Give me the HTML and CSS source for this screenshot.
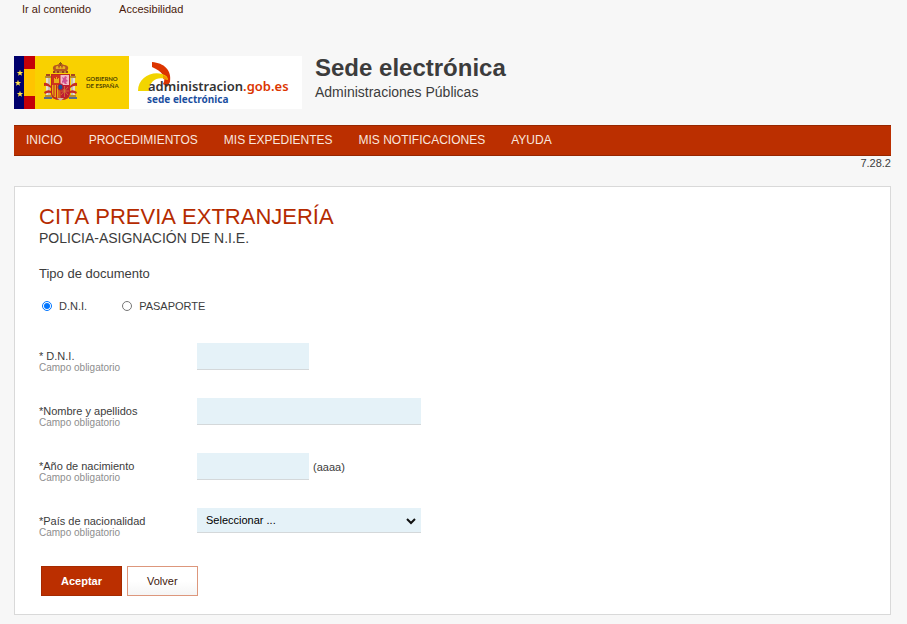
FILE: index.html
```
<!DOCTYPE html>
<html lang="es">
<head>
<meta charset="utf-8">
<meta name="viewport" content="width=device-width, initial-scale=1">
<title>Sede electrónica</title>
<link rel="stylesheet" href="styles.css">
</head>
<body>
<div class="quick-links">
  <a href="#contenido">Ir al contenido</a>
  <a href="#accesibilidad">Accesibilidad</a>
</div>
<header class="header">
  <svg class="logo" width="288" height="53" viewBox="0 0 288 53">
    <rect width="288" height="53" fill="#fff"/>
    <rect width="115" height="53" fill="#f9d100"/>
    <rect width="10" height="53" fill="#00006c"/>
    <rect x="10" width="11" height="53" fill="#ffc400"/>
    <rect x="10" width="11" height="13" fill="#c40008"/>
    <rect x="10" y="40" width="11" height="13" fill="#c40008"/>
    <defs><path id="star" fill="#ffe34d" d="M0-3.2.8-1h2.4L1.3.5 2 2.8 0 1.4-2 2.8-1.3.5-3.2-1H-.8z"/></defs>
    <use href="#star" x="6" y="17"/><use href="#star" x="4" y="27"/><use href="#star" x="6" y="38"/>
    <!-- Coat of arms -->
    <g>
      <path d="M40 15c-3-5 1-6 3-6 1-1 2-1 3.500-1s2.500 0 3.500 1c3 0 6 2 3 6z" fill="#b6571f"/>
      <path d="M42 13c-1-3 1-3 2-3l1 3 1.500-4 1.500 4 1-3c2 0 3 1 2 3z" fill="#e8b21c"/>
      <path d="M46.500 6v4M45 7.500h3" stroke="#8a5a10" fill="none"/>
      <path d="M39 15h15v2H39z" fill="#96401c"/>
      <path d="M41 16h2m2 0h3m2 0h2" stroke="#e8c33c" fill="none"/>
      <path d="M37 18h19v20q0 6-9.500 6T37 38z" fill="#bd2a20"/>
      <path d="M38 19h8.500v10H38z" fill="#d1321c"/>
      <path d="M40 27v-5h1v1h1v-2h1v2h1v-1h1v5z" fill="#e9ad1b"/>
      <path d="M46.500 19H55v10h-8.500z" fill="#f2b9c4"/>
      <path d="m48 21 2 1 1-2 2 1-1 2 2 2-2 1 1 2h-2l-2-2-1 2v-3l1-1z" fill="#cf4f91"/>
      <path d="M38 29h8.500v13q-8.500 0-8.500-5z" fill="#e8a918"/>
      <path d="M40 29v11m2.500-11v13m2.500-13v13" stroke="#c3231c" fill="none"/>
      <path d="M46.500 29H55v8q0 5-8.500 5z" fill="#bd1b35"/>
      <path d="m47 31 7 8m0-8-7 8m3.500-9v11M47 35h8" stroke="#d98735" stroke-width=".7" fill="none"/>
      <ellipse cx="46.500" cy="31" rx="3" ry="3.500" fill="#b51d30"/>
      <ellipse cx="46.500" cy="31" rx="2" ry="2.500" fill="#164f9a"/>
      <path d="M43 42h7l-3.500 3z" fill="#d7b4a0"/>
      <g id="pillar">
        <path d="M32 21h4v19h-4z" fill="#e6dfcd"/>
        <path d="M35 22v17" stroke="#a8a391" fill="none"/>
        <path d="M31 20h6v2h-6zM31 39h6v2h-6z" fill="#b98b29"/>
        <path d="M32 20v-2h4v2z" fill="#a64620"/>
        <path d="M30 41h8v2h-8z" fill="#596b8a"/>
        <path d="M30 27q3-1 7 3v2q-4-3-7-2zM30 36q4-3 7-1v2q-3-1-6 1z" fill="#c72c20"/>
      </g>
      <use href="#pillar" transform="matrix(-1 0 0 1 93 0)"/>
    </g>
    <text class="gov-text" x="72" y="25">GOBIERNO</text>
    <text class="gov-text" x="72" y="32">DE ESPAÑA</text>
    <path d="M138 6c12 1 20 8 18 20l-3 5-4-3c4-6-1-13-11-17z" fill="#dc3500"/>
    <path d="M124 35c0-13 13-20 24-17 4 1 6 3 6 6-9-4-18-1-19 11z" fill="#f2d500"/>
    <path d="M149 19c3 1 5 3 5 5l-5-1z" fill="#f39800"/>
    <text class="site-text" x="134" y="35">administracion<tspan fill="#dc3500">.gob.es</tspan></text>
    <text class="office-text" x="133" y="47">sede electrónica</text>
  </svg>
  <div>
    <div class="site-name">Sede electrónica</div>
    <div class="site-owner">Administraciones Públicas</div>
  </div>
</header>
<nav class="nav">
  <a href="#inicio">INICIO</a>
  <a href="#procedimientos">PROCEDIMIENTOS</a>
  <a href="#expedientes">MIS EXPEDIENTES</a>
  <a href="#notificaciones">MIS NOTIFICACIONES</a>
  <a href="#ayuda">AYUDA</a>
</nav>
<div class="version">7.28.2</div>
<main class="card" id="contenido">
  <h1>CITA PREVIA EXTRANJERÍA</h1>
  <h2>POLICIA-ASIGNACIÓN DE N.I.E.</h2>
  <form>
    <fieldset class="doc-type">
      <legend>Tipo de documento</legend>
      <div class="options">
        <label><input type="radio" name="doc" checked>D.N.I.</label>
        <label><input type="radio" name="doc">PASAPORTE</label>
      </div>
    </fieldset>
    <div class="fields">
      <div class="row">
        <label for="dni">* D.N.I.<small>Campo obligatorio</small></label>
        <div class="control"><input class="short" id="dni" type="text"></div>
      </div>
      <div class="row">
        <label for="nombre">*Nombre y apellidos<small>Campo obligatorio</small></label>
        <div class="control"><input id="nombre" type="text"></div>
      </div>
      <div class="row">
        <label for="anio">*Año de nacimiento<small>Campo obligatorio</small></label>
        <div class="control"><input class="short" id="anio" type="text"><span>(aaaa)</span></div>
      </div>
      <div class="row">
        <label for="pais">*País de nacionalidad<small>Campo obligatorio</small></label>
        <div class="control select">
          <select id="pais"><option>Seleccionar ...</option></select>
          <svg class="chevron" width="10" height="8" viewBox="0 0 10 8"><path d="m1 2 4 4 4-4" fill="none" stroke="#111" stroke-width="2"/></svg>
        </div>
      </div>
    </div>
    <div class="actions">
      <button class="primary" type="submit">Aceptar</button>
      <button type="button">Volver</button>
    </div>
  </form>
</main>
</body>
</html>
```
FILE: styles.css
```
* { box-sizing: border-box; }

body {
  margin: 0;
  padding: 0 16px 8px 14px;
  background: #f7f7f7;
  color: #3c3c3c;
  font: 11px/12px "Liberation Sans", Arial, sans-serif;
}

a { color: inherit; text-decoration: none; }

.quick-links {
  display: flex;
  gap: 28px;
  padding: 3px 8px;
  color: #4a1a0a;
}

.header {
  display: flex;
  gap: 13px;
  margin-top: 38px;
}

.logo { flex: none; }
.gov-text { font: 700 6px "Lato", sans-serif; fill: #4f4300; }
.site-text { font: 600 13px "Noto Sans", sans-serif; fill: #333; }
.office-text { font: 700 10px "Noto Sans", sans-serif; fill: #1c4f9f; }

.site-name { font-size: 24px; line-height: 24px; font-weight: bold; }
.site-owner { font-size: 14px; line-height: 24px; font-kerning: none; }

.nav {
  display: flex;
  flex-wrap: wrap;
  gap: 0 26px;
  margin-top: 16px;
  padding: 0 12px;
  background: #bb2f00;
  border: 1px solid #962600;
  border-width: 1px 0;
  color: #f9e6df;
  font-size: 12px;
  line-height: 29px;
}

.version { margin-top: 1px; text-align: right; }

.card {
  margin-top: 17px;
  padding: 17px 24px 18px;
  background: #fff;
  border: 1px solid #d9d9d9;
}

h1, h2 { margin: 0; font-weight: normal; font-kerning: none; }
h1 { color: #b52b00; font-size: 22px; line-height: 26px; }
h2 { font-size: 14px; line-height: 16px; }

.doc-type { margin: 20px 0 0; padding: 0; border: 0; }
legend { padding: 0; font-size: 13px; line-height: 16px; }

.options { display: flex; gap: 35px; padding: 18px 0 0 3px; }
.options label { display: flex; align-items: center; gap: 7px; line-height: 12px; }
.options input { width: 10px; height: 10px; margin: 0; }

.fields { display: grid; gap: 24px; margin-top: 31px; }

.row {
  display: grid;
  grid-template-columns: 158px 1fr;
  align-items: start;
}

.row label { padding-top: 7px; }

small { display: block; color: #8e8e8e; font-size: 10px; }

.control { display: flex; align-items: center; gap: 4px; }
.select { position: relative; width: 224px; }

.control input, select {
  width: 224px;
  height: 27px;
  padding: 0 9px;
  border: 0;
  border-bottom: 1px solid #d4d8da;
  border-radius: 0;
  background: #e5f2f8;
  color: #000;
  font: inherit;
}

.control input.short { width: 112px; }
select { height: 25px; appearance: none; }
.chevron { position: absolute; right: 5px; top: 9px; pointer-events: none; }

.actions { display: flex; gap: 5px; margin: 27px 0 0 2px; }

button {
  height: 30px;
  padding: 0 19px;
  border: 1px solid #dd977c;
  background: linear-gradient(#fff 50%, #f5f5f5);
  color: #3d170b;
  font: inherit;
}

.primary {
  background: #bb2f00;
  border-color: #a52a00;
  color: #fff;
  font-weight: bold;
}
```
